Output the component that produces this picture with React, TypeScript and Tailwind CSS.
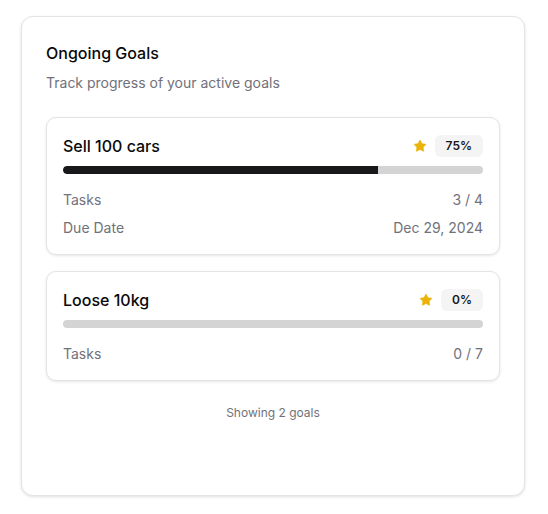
import { Star } from "lucide-react";

type Goal = {
  title: string;
  progress: number;
  tasks: string;
  due?: string;
};

const goals: Goal[] = [
  { title: "Sell 100 cars", progress: 75, tasks: "3 / 4", due: "Dec 29, 2024" },
  { title: "Loose 10kg", progress: 0, tasks: "0 / 7" },
];

function GoalCard({ goal }: { goal: Goal }) {
  return (
    <div className="rounded-[10px] border border-[#e4e4e7] bg-white p-4 shadow-[0_1px_3px_rgba(0,0,0,0.1)]">
      <div className="flex h-6 items-center justify-between">
        <h3 className="text-base font-medium text-[#09090b]">{goal.title}</h3>
        <div className="flex items-center gap-2">
          <Star className="h-3.5 w-3.5 fill-[#eab308] text-[#eab308]" strokeWidth={1} />
          <span className="flex h-[22px] items-center rounded-md bg-[#f4f4f5] px-[11px] text-xs font-semibold text-[#18181b]">
            {goal.progress}%
          </span>
        </div>
      </div>
      <div className="mt-2 h-2 w-full overflow-hidden rounded-full bg-[#d4d4d4]">
        <div className="h-full rounded-l-full bg-[#18181b]" style={{ width: `${goal.progress}%` }} />
      </div>
      <div className="mt-4 flex flex-col gap-2 text-sm text-[#71717a]">
        <div className="flex justify-between">
          <span>Tasks</span>
          <span>{goal.tasks}</span>
        </div>
        {goal.due ? (
          <div className="flex justify-between">
            <span>Due Date</span>
            <span>{goal.due}</span>
          </div>
        ) : null}
      </div>
    </div>
  );
}

export default function App() {
  return (
    <main className="min-h-screen bg-white pt-4 pl-[21px] font-['Inter',sans-serif]">
      <section className="h-[480px] w-[504px] rounded-xl border border-[#e4e4e7] bg-white p-6 shadow-[0_1px_3px_rgba(0,0,0,0.12)]">
        <h2 className="text-base leading-6 font-medium text-[#09090b]">Ongoing Goals</h2>
        <p className="mt-2 text-sm text-[#71717a]">Track progress of your active goals</p>
        <div className="mt-6 flex flex-col gap-4">
          {goals.map((g) => (
            <GoalCard key={g.title} goal={g} />
          ))}
        </div>
        <p className="mt-6 text-center text-xs text-[#71717a]">Showing 2 goals</p>
      </section>
    </main>
  );
}
